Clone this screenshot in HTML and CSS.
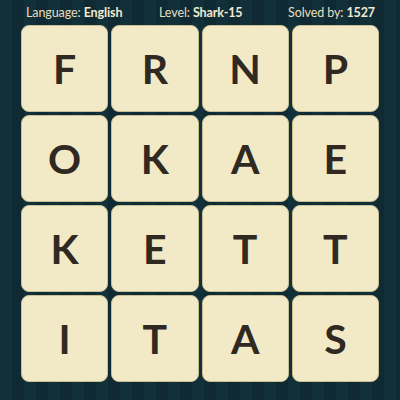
FILE: index.html
```html
<!DOCTYPE html>
<html>
<head>
<meta charset="utf-8">
<link rel="stylesheet" href="styles.css">
</head>
<body>
<div class="page">
  <div class="header">
    <div class="info info-lang">Language: <b>English</b></div>
    <div class="info info-level">Level: <b>Shark-15</b></div>
    <div class="info info-solved">Solved by: <b>1527</b></div>
  </div>
  <div class="board">
    <div class="tile">F</div>
    <div class="tile">R</div>
    <div class="tile">N</div>
    <div class="tile">P</div>
    <div class="tile">O</div>
    <div class="tile">K</div>
    <div class="tile">A</div>
    <div class="tile">E</div>
    <div class="tile">K</div>
    <div class="tile">E</div>
    <div class="tile">T</div>
    <div class="tile">T</div>
    <div class="tile">I</div>
    <div class="tile">T</div>
    <div class="tile">A</div>
    <div class="tile">S</div>
  </div>
</div>
</body>
</html>
```
FILE: styles.css
```css
html, body {
  margin: 0;
  padding: 0;
}
body {
  width: 400px;
  height: 400px;
  overflow: hidden;
  background-color: #11303a;
  background-image: repeating-linear-gradient(90deg, #113039 0px, #113039 12px, #0f2a33 12px, #0f2a33 24px);
  font-family: "Lato", "Open Sans", sans-serif;
}
.page {
  display: flex;
  flex-direction: column;
}
.header {
  height: 25px;
  display: flex;
  align-items: center;
  color: #e6dfbf;
  font-size: 12.5px;
  letter-spacing: -0.1px;
  padding-left: 26px;
}
.header b {
  font-weight: 700;
  color: #f1ead0;
}
.info-lang { width: 133px; }
.info-level { width: 129px; }
.board {
  display: grid;
  grid-template-columns: repeat(4, 1fr);
  grid-auto-rows: 87px;
  gap: 3px;
  padding: 0 21px;
}
.tile {
  background: #f2eac6;
  border: 1px solid #c9bf95;
  border-radius: 8px;
  display: flex;
  align-items: center;
  justify-content: center;
  font-size: 41px;
  font-weight: 700;
  color: #2f2922;
  box-sizing: border-box;
}
```
